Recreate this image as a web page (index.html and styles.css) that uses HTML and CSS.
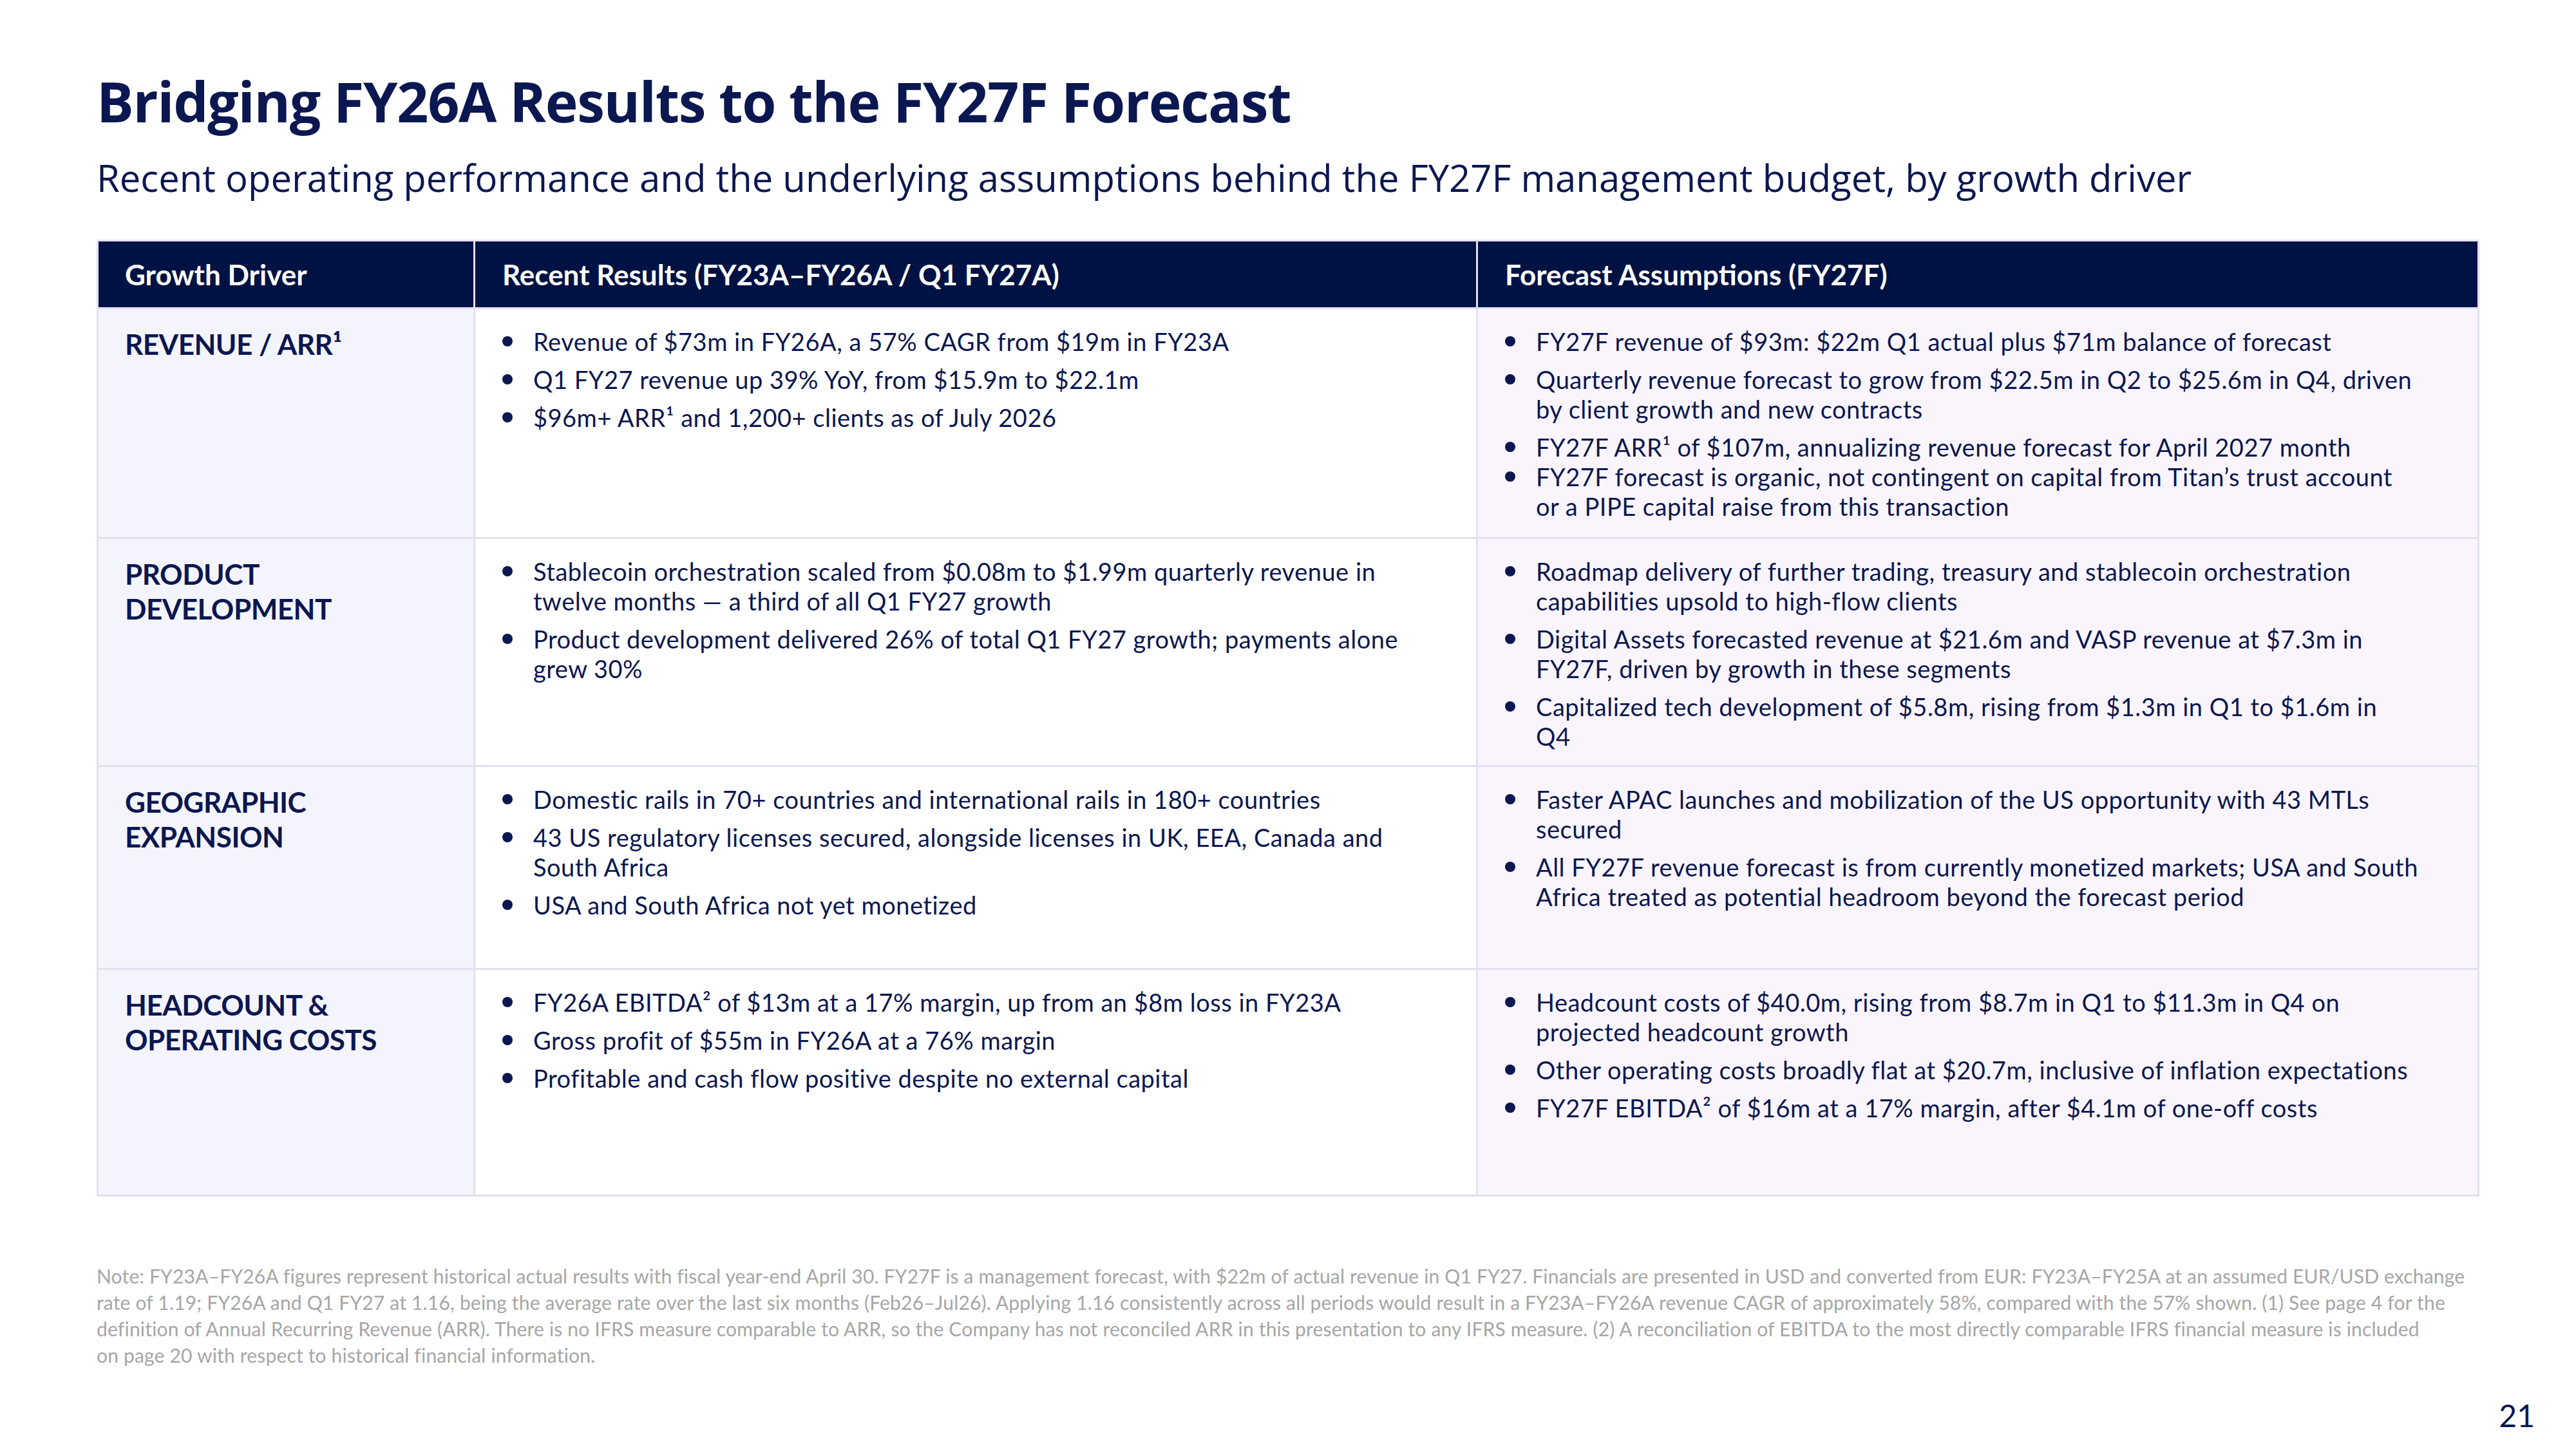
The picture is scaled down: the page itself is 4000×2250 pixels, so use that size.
FILE: index.html
```html
<!DOCTYPE html>
<html lang="en">
<head>
<meta charset="utf-8">
<title>Bridging FY26A Results to the FY27F Forecast</title>
<link rel="stylesheet" href="styles.css">
</head>
<body>
<div class="slide">
  <h1 class="title">Bridging FY26A Results to the FY27F Forecast</h1>
  <p class="subtitle">Recent operating performance and the underlying assumptions behind the FY27F management budget, by growth driver</p>

  <div class="table">
    <div class="th th-driver">Growth Driver</div>
    <div class="th">Recent Results (FY23A–FY26A / Q1 FY27A)</div>
    <div class="th">Forecast Assumptions (FY27F)</div>

    <div class="td td-label"><span class="label">REVENUE / ARR¹</span></div>
    <div class="td td-results">
      <ul class="bullets">
        <li><span>Revenue of $73m in FY26A, a 57% CAGR from $19m in FY23A</span></li>
        <li><span>Q1 FY27 revenue up 39% YoY, from $15.9m to $22.1m</span></li>
        <li><span>$96m+ ARR¹ and 1,200+ clients as of July 2026</span></li>
      </ul>
    </div>
    <div class="td td-forecast">
      <ul class="bullets">
        <li><span>FY27F revenue of $93m: $22m Q1 actual plus $71m balance of forecast</span></li>
        <li><span>Quarterly revenue forecast to grow from $22.5m in Q2 to $25.6m in Q4, driven<br>by client growth and new contracts</span></li>
        <li><span>FY27F ARR¹ of $107m, annualizing revenue forecast for April 2027 month</span></li>
        <li class="tight"><span>FY27F forecast is organic, not contingent on capital from Titan’s trust account<br>or a PIPE capital raise from this transaction</span></li>
      </ul>
    </div>

    <div class="td td-label"><span class="label">PRODUCT DEVELOPMENT</span></div>
    <div class="td td-results">
      <ul class="bullets">
        <li><span>Stablecoin orchestration scaled from $0.08m to $1.99m quarterly revenue in<br>twelve months — a third of all Q1 FY27 growth</span></li>
        <li><span>Product development delivered 26% of total Q1 FY27 growth; payments alone<br>grew 30%</span></li>
      </ul>
    </div>
    <div class="td td-forecast">
      <ul class="bullets">
        <li><span>Roadmap delivery of further trading, treasury and stablecoin orchestration<br>capabilities upsold to high-flow clients</span></li>
        <li><span>Digital Assets forecasted revenue at $21.6m and VASP revenue at $7.3m in<br>FY27F, driven by growth in these segments</span></li>
        <li><span>Capitalized tech development of $5.8m, rising from $1.3m in Q1 to $1.6m in<br>Q4</span></li>
      </ul>
    </div>

    <div class="td td-label"><span class="label">GEOGRAPHIC EXPANSION</span></div>
    <div class="td td-results">
      <ul class="bullets">
        <li><span>Domestic rails in 70+ countries and international rails in 180+ countries</span></li>
        <li><span>43 US regulatory licenses secured, alongside licenses in UK, EEA, Canada and<br>South Africa</span></li>
        <li><span>USA and South Africa not yet monetized</span></li>
      </ul>
    </div>
    <div class="td td-forecast">
      <ul class="bullets">
        <li><span>Faster APAC launches and mobilization of the US opportunity with 43 MTLs<br>secured</span></li>
        <li><span>All FY27F revenue forecast is from currently monetized markets; USA and South<br>Africa treated as potential headroom beyond the forecast period</span></li>
      </ul>
    </div>

    <div class="td td-label"><span class="label">HEADCOUNT &amp; OPERATING COSTS</span></div>
    <div class="td td-results">
      <ul class="bullets">
        <li><span>FY26A EBITDA² of $13m at a 17% margin, up from an $8m loss in FY23A</span></li>
        <li><span>Gross profit of $55m in FY26A at a 76% margin</span></li>
        <li><span>Profitable and cash flow positive despite no external capital</span></li>
      </ul>
    </div>
    <div class="td td-forecast">
      <ul class="bullets">
        <li><span>Headcount costs of $40.0m, rising from $8.7m in Q1 to $11.3m in Q4 on<br>projected headcount growth</span></li>
        <li><span>Other operating costs broadly flat at $20.7m, inclusive of inflation expectations</span></li>
        <li><span>FY27F EBITDA² of $16m at a 17% margin, after $4.1m of one-off costs</span></li>
      </ul>
    </div>
  </div>

  <p class="note">Note: FY23A–FY26A figures represent historical actual results with fiscal year-end April 30. FY27F is a management forecast, with $22m of actual revenue in Q1 FY27. Financials are presented in USD and converted from EUR: FY23A–FY25A at an assumed EUR/USD exchange<br>rate of 1.19; FY26A and Q1 FY27 at 1.16, being the average rate over the last six months (Feb26–Jul26). Applying 1.16 consistently across all periods would result in a FY23A–FY26A revenue CAGR of approximately 58%, compared with the 57% shown. (1) See page 4 for the<br>definition of Annual Recurring Revenue (ARR). There is no IFRS measure comparable to ARR, so the Company has not reconciled ARR in this presentation to any IFRS measure. (2) A reconciliation of EBITDA to the most directly comparable IFRS financial measure is included<br>on page 20 with respect to historical financial information.</p>

  <div class="page-num">21</div>
</div>
</body>
</html>
```

FILE: styles.css
```css
* { box-sizing: border-box; }

html, body {
  margin: 0;
  padding: 0;
  background: #ffffff;
}

.slide {
  width: 4000px;
  height: 2250px;
  padding: 103px 0 0 150px;
  display: flex;
  flex-direction: column;
  background: #ffffff;
  color: #0b1750;
}

.title {
  margin: 0;
  font-family: "Open Sans", "Noto Sans", sans-serif;
  font-weight: 700;
  font-size: 86px;
  line-height: 108px;
  color: #0b1750;
  letter-spacing: -1.3px;
}

.subtitle {
  margin: 31px 0 0 0;
  font-family: "Open Sans", "Noto Sans", sans-serif;
  font-weight: 400;
  font-size: 58px;
  line-height: 68px;
  color: #0b1750;
}

.table {
  margin-top: 62px;
  width: 3700px;
  display: grid;
  grid-template-columns: 582px 1554px 1552px;
  grid-template-rows: 102px 354px 351px 312px 349px;
  gap: 3px;
  padding: 3px;
  background: #e2e0f1;
  font-family: "Lato", "Open Sans", sans-serif;
}

.th {
  background: #001244;
  color: #ffffff;
  font-weight: 700;
  font-size: 44px;
  display: flex;
  align-items: center;
  padding-left: 42px;
}

.th-driver {
  padding-left: 41px;
}

.td {
  padding: 27px 0 0 42px;
}

.td-label {
  background: #f4f4fd;
  padding-left: 41px;
}

.td-results {
  background: #ffffff;
}

.td-forecast {
  background: #faf5fd;
}

.label {
  display: block;
  width: 420px;
  font-weight: 700;
  font-size: 44px;
  line-height: 54px;
  letter-spacing: -0.5px;
  color: #0b1750;
}

.bullets {
  list-style: none;
  margin: 0;
  padding: 0;
}

.bullets li {
  display: flex;
  align-items: flex-start;
  font-size: 38px;
  line-height: 46px;
  letter-spacing: 0.5px;
  color: #0b1750;
  margin-top: 13px;
}

.bullets li:first-child {
  margin-top: 0;
}

.bullets li.tight {
  margin-top: 0;
}

.bullets li::before {
  content: "";
  flex: 0 0 16px;
  height: 16px;
  margin-top: 15px;
  margin-right: 32px;
  border-radius: 50%;
  background: #0b1750;
}

.note {
  margin: 103px 0 0 0;
  width: 3800px;
  font-family: "Lato", "Open Sans", sans-serif;
  font-size: 30px;
  line-height: 41px;
  letter-spacing: 0.18px;
  color: #a6a6a6;
}

.page-num {
  margin-top: auto;
  margin-bottom: 24px;
  padding-right: 64px;
  text-align: right;
  font-family: "Lato", "Open Sans", sans-serif;
  font-size: 48px;
  line-height: 56px;
  color: #0b1750;
}
```
